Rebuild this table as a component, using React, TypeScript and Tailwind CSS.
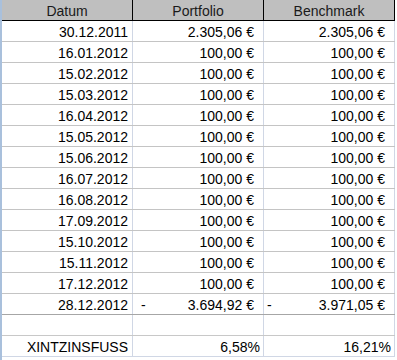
/**
 * Spreadsheet excerpt: payment dates with portfolio vs. benchmark amounts
 * and the resulting internal rate of return (XINTZINSFUSS) at the bottom.
 */

type Row = { date: string; portfolio: string; benchmark: string; negative?: boolean };

const rows: Row[] = [
  { date: "30.12.2011", portfolio: "2.305,06 €", benchmark: "2.305,06 €" },
  { date: "16.01.2012", portfolio: "100,00 €", benchmark: "100,00 €" },
  { date: "15.02.2012", portfolio: "100,00 €", benchmark: "100,00 €" },
  { date: "15.03.2012", portfolio: "100,00 €", benchmark: "100,00 €" },
  { date: "16.04.2012", portfolio: "100,00 €", benchmark: "100,00 €" },
  { date: "15.05.2012", portfolio: "100,00 €", benchmark: "100,00 €" },
  { date: "15.06.2012", portfolio: "100,00 €", benchmark: "100,00 €" },
  { date: "16.07.2012", portfolio: "100,00 €", benchmark: "100,00 €" },
  { date: "16.08.2012", portfolio: "100,00 €", benchmark: "100,00 €" },
  { date: "17.09.2012", portfolio: "100,00 €", benchmark: "100,00 €" },
  { date: "15.10.2012", portfolio: "100,00 €", benchmark: "100,00 €" },
  { date: "15.11.2012", portfolio: "100,00 €", benchmark: "100,00 €" },
  { date: "17.12.2012", portfolio: "100,00 €", benchmark: "100,00 €" },
  { date: "28.12.2012", portfolio: "3.694,92 €", benchmark: "3.971,05 €", negative: true },
];

const cell = "flex h-[20px] w-[131px] items-center border-r border-[#d0d7e5] pt-[2px]";

function MoneyCell({
  value,
  negative,
  dashPad,
}: {
  value: string;
  negative?: boolean;
  dashPad: string;
}) {
  return (
    <div className={`${cell} justify-between pr-[9px] ${dashPad}`}>
      <span>{negative ? "-" : ""}</span>
      <span>{value}</span>
    </div>
  );
}

export default function App() {
  return (
    <div
      className="h-[360px] w-[397px] overflow-hidden bg-white text-[14px] leading-none text-black"
      style={{ fontFamily: '"Liberation Sans", Arial, sans-serif' }}
    >
      <div className="flex h-full border-l-2 border-[#a9c0dc]">
        <div className="flex w-[393px] flex-col">
          {/* header */}
          <div className="flex h-[21px] border-b border-black bg-[#bfbfbf]">
            {["Datum", "Portfolio", "Benchmark"].map((h) => (
              <div
                key={h}
                className="flex h-[20px] w-[131px] items-center justify-center border-r border-black pt-[2px] text-[#1a1a1a]"
              >
                {h}
              </div>
            ))}
          </div>

          {rows.map((r, i) => (
            <div
              key={r.date}
              className={`flex border-b ${
                i === rows.length - 1 ? "border-[#a6a6a6]" : "border-[#c4c4c4]"
              }`}
            >
              <div className={`${cell} justify-end pr-[4px]`}>{r.date}</div>
              <MoneyCell value={r.portfolio} negative={r.negative} dashPad="pl-[8px]" />
              <MoneyCell value={r.benchmark} negative={r.negative} dashPad="pl-[3px]" />
            </div>
          ))}

          {/* empty spacer row */}
          <div className="flex border-b border-[#c8c8c8]">
            <div className={cell} />
            <div className={cell} />
            <div className={cell} />
          </div>

          <div className="flex border-b border-[#d0d7e5]">
            <div className={`${cell} justify-end pr-[4px]`}>XINTZINSFUSS</div>
            <div className={`${cell} justify-end pr-[3px]`}>6,58%</div>
            <div className={`${cell} justify-end pr-[3px]`}>16,21%</div>
          </div>
        </div>
      </div>
    </div>
  );
}
